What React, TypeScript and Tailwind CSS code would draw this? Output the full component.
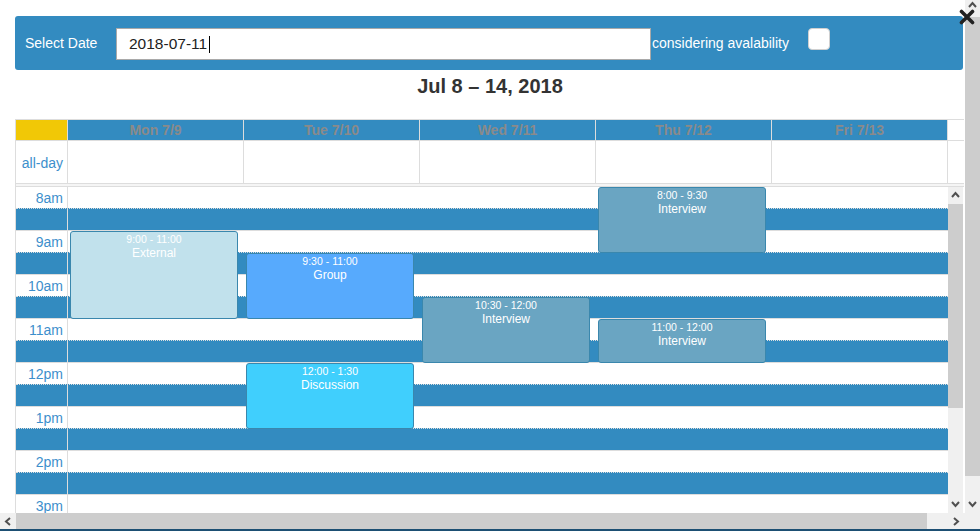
import React from "react";

const ROWS = 15;
const LABELS: Record<number, string> = {
  0: "8am",
  2: "9am",
  4: "10am",
  6: "11am",
  8: "12pm",
  10: "1pm",
  12: "2pm",
  14: "3pm",
};

type Ev = { col: number; start: number; slots: number; time: string; title: string; bg: string };

const EVENTS: Ev[] = [
  { col: 0, start: 2, slots: 4, time: "9:00 - 11:00", title: "External", bg: "bg-[#c1e1ec]" },
  { col: 1, start: 3, slots: 3, time: "9:30 - 11:00", title: "Group", bg: "bg-[#57aafd]" },
  { col: 2, start: 5, slots: 3, time: "10:30 - 12:00", title: "Interview", bg: "bg-[#6aa5c2]" },
  { col: 3, start: 0, slots: 3, time: "8:00 - 9:30", title: "Interview", bg: "bg-[#6aa5c2]" },
  { col: 3, start: 6, slots: 2, time: "11:00 - 12:00", title: "Interview", bg: "bg-[#6aa5c2]" },
  { col: 1, start: 8, slots: 3, time: "12:00 - 1:30", title: "Discussion", bg: "bg-[#40cffd]" },
];

const DAYS = ["Mon 7/9", "Tue 7/10", "Wed 7/11", "Thu 7/12", "Fri 7/13"];

function Chevron({ dir, className }: { dir: "up" | "down" | "left" | "right"; className?: string }) {
  const d =
    dir === "up"
      ? "M1 6 L4.5 2 L8 6"
      : dir === "down"
      ? "M1 2 L4.5 6 L8 2"
      : dir === "left"
      ? "M6 1 L2 4.5 L6 8"
      : "M2 1 L6 4.5 L2 8";
  return (
    <svg width="9" height="9" viewBox="0 0 9 9" className={className}>
      <path d={d} fill="none" stroke="#505050" strokeWidth="2" />
    </svg>
  );
}

export default function App() {
  return (
    <div className="relative w-[980px] h-[531px] overflow-hidden bg-white font-['Liberation_Sans',Arial,sans-serif]">
      <div className="flex h-[513px]">
        {/* main column */}
        <div className="w-[965px] flex flex-col">
          {/* header bar */}
          <div className="ml-[15px] mt-[16px] w-[948px] h-[54px] bg-[#338bc0] rounded-[3px] flex items-start pt-[12px] pl-[10px] text-white text-[14px]">
            <div className="w-[91px] leading-[30px]">Select Date</div>
            <div className="w-[535px] h-[32px] bg-white border border-[#a9a9a9] flex items-center pl-[12px] text-[15.5px] text-[#222]">
              <span>2018-07-11</span>
              <span className="ml-[2px] w-px h-[17px] bg-black" />
            </div>
            <div className="w-[157px] pl-px leading-[30px]">considering avalability</div>
            <div className="w-[22px] h-[22px] bg-white rounded-[4px] border border-[#d0d0d0]" />
          </div>

          {/* title */}
          <div className="h-[49px] pt-[5px] pl-[15px] text-center text-[20px] leading-[22px] font-bold text-[#333]">
            Jul 8 – 14, 2018
          </div>

          {/* calendar */}
          <div className="ml-[15px] w-[949px] border-l border-t border-[#ddd] flex flex-col flex-1 min-h-0">
            {/* header row */}
            <div className="grid grid-cols-[52px_repeat(5,176px)_16px] h-[21px] border-b border-[#ddd]">
              <div className="bg-[#f1c806] border-r border-[#ddd]" />
              {DAYS.map((d) => (
                <div
                  key={d}
                  className="bg-[#338bc0] border-r border-[#ddd] text-center text-[14px] leading-[20px] font-bold text-[#8a8a8a]"
                >
                  {d}
                </div>
              ))}
              <div className="bg-white" />
            </div>
            {/* all-day row */}
            <div className="grid grid-cols-[52px_repeat(5,176px)_16px] h-[43px] border-b border-[#ddd]">
              <div className="border-r border-[#ddd] text-right pr-[4px] pt-px text-[14px] leading-[42px] text-[#3d8fcc]">
                all-day
              </div>
              {DAYS.map((d) => (
                <div key={d} className="border-r border-[#ddd]" />
              ))}
              <div />
            </div>
            {/* divider */}
            <div className="h-[2px] bg-[#f5f5f5]" />

            {/* time grid */}
            <div className="flex flex-1 min-h-0">
              <div className="relative w-[932px] overflow-hidden">
                {Array.from({ length: ROWS }).map((_, i) => {
                  const even = i % 2 === 0;
                  return (
                    <div
                      key={i}
                      className={
                        even
                          ? "flex h-[22px] border-t border-solid border-[#ddd] bg-white"
                          : "flex h-[22px] border-t border-dotted border-[#ddd] bg-[#338bc0]"
                      }
                    >
                      <div className="w-[52px] shrink-0 border-r border-[#ddd] text-right pr-[4px] pt-px text-[14px] leading-[21px] text-[#3d8fcc]">
                        {LABELS[i] ?? ""}
                      </div>
                      <div className="flex-1" />
                    </div>
                  );
                })}
                {/* events overlay */}
                <div className="absolute top-0 bottom-0 left-[52px] right-0">
                  {EVENTS.map((e, idx) => (
                    <div
                      key={idx}
                      className={`absolute w-[168px] border border-[#3a87ad] rounded-[3px] text-white text-center ${e.bg}`}
                      style={{ left: e.col * 176 + 2, top: e.start * 22 + 1, height: e.slots * 22 }}
                    >
                      <div className="pt-[1px] text-[10.5px] leading-[13px]">{e.time}</div>
                      <div className="text-[12px] leading-[14px]">{e.title}</div>
                    </div>
                  ))}
                </div>
              </div>
              {/* inner vertical scrollbar */}
              <div className="w-[16px] border-t border-[#ddd] flex">
                <div className="w-[15px] bg-[#f0f0f0] flex flex-col">
                  <div className="h-[17px] flex items-center justify-center">
                    <Chevron dir="up" />
                  </div>
                  <div className="h-[204px] bg-[#cdcdcd]" />
                  <div className="flex-1" />
                  <div className="h-[17px] flex items-center justify-center">
                    <Chevron dir="down" />
                  </div>
                </div>
              </div>
            </div>
          </div>
        </div>

        {/* outer vertical scrollbar */}
        <div className="w-[15px] bg-[#f0f0f0] flex flex-col">
          <div className="h-[17px] flex items-start justify-center pt-[1px]">
            <Chevron dir="up" />
          </div>
          <div className="h-[459px] bg-[#cdcdcd]" />
          <div className="flex-1" />
          <div className="h-[17px] flex items-center justify-center">
            <Chevron dir="down" />
          </div>
        </div>
      </div>

      {/* horizontal scrollbar */}
      <div className="flex h-[16px] bg-[#f0f0f0]">
        <div className="w-[16px] flex items-center justify-center">
          <Chevron dir="left" />
        </div>
        <div className="w-[911px] bg-[#cdcdcd]" />
        <div className="flex-1" />
        <div className="w-[17px] flex items-center justify-center">
          <Chevron dir="right" />
        </div>
        <div className="w-[15px]" />
      </div>
      <div className="h-[2px] bg-[#1d4f73]" />

      {/* close icon */}
      <svg className="absolute left-[959px] top-[9px]" width="16" height="16" viewBox="0 0 16 16">
        <path d="M2.5 2.5 L13.5 13.5 M13.5 2.5 L2.5 13.5" stroke="#222" strokeWidth="3.6" strokeLinecap="round" />
      </svg>
    </div>
  );
}
